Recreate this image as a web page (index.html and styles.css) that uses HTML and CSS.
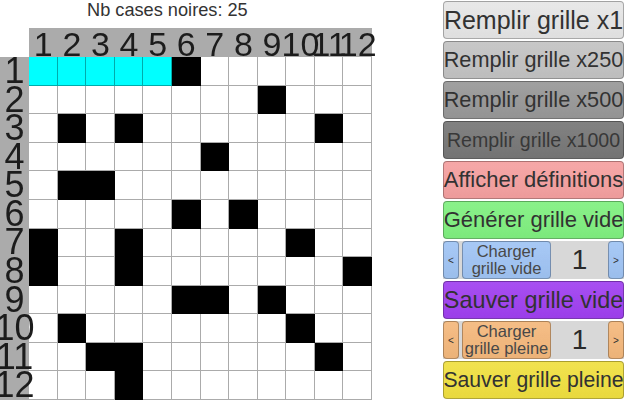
FILE: index.html
```html
<!DOCTYPE html>
<html lang="fr">
<head>
<meta charset="utf-8">
<title>Grille</title>
<link rel="stylesheet" href="styles.css">
</head>
<body>
<div class="page">
  <div class="left">
    <div class="title">Nb cases noires: 25</div>
    <div class="board">
      <div class="corner"></div>
      <div class="colhead">
        <span>1</span><span>2</span><span>3</span><span>4</span><span>5</span><span>6</span><span>7</span><span>8</span><span>9</span><span>10</span><span>11</span><span>12</span>
      </div>
      <div class="rowhead">
        <span>1</span><span>2</span><span>3</span><span>4</span><span>5</span><span>6</span><span>7</span><span>8</span><span>9</span><span>10</span><span>11</span><span>12</span>
      </div>
      <div class="cells">
        <span class="h"></span><span class="h"></span><span class="h"></span><span class="h"></span><span class="h"></span><span class="b"></span><span></span><span></span><span></span><span></span><span></span><span></span>
        <span></span><span></span><span></span><span></span><span></span><span></span><span></span><span></span><span class="b"></span><span></span><span></span><span></span>
        <span></span><span class="b"></span><span></span><span class="b"></span><span></span><span></span><span></span><span></span><span></span><span></span><span class="b"></span><span></span>
        <span></span><span></span><span></span><span></span><span></span><span></span><span class="b"></span><span></span><span></span><span></span><span></span><span></span>
        <span></span><span class="b"></span><span class="b"></span><span></span><span></span><span></span><span></span><span></span><span></span><span></span><span></span><span></span>
        <span></span><span></span><span></span><span></span><span></span><span class="b"></span><span></span><span class="b"></span><span></span><span></span><span></span><span></span>
        <span class="b"></span><span></span><span></span><span class="b"></span><span></span><span></span><span></span><span></span><span></span><span class="b"></span><span></span><span></span>
        <span class="b"></span><span></span><span></span><span class="b"></span><span></span><span></span><span></span><span></span><span></span><span></span><span></span><span class="b"></span>
        <span></span><span></span><span></span><span></span><span></span><span class="b"></span><span class="b"></span><span></span><span class="b"></span><span></span><span></span><span></span>
        <span></span><span class="b"></span><span></span><span></span><span></span><span></span><span></span><span></span><span></span><span class="b"></span><span></span><span></span>
        <span></span><span></span><span class="b"></span><span class="b"></span><span></span><span></span><span></span><span></span><span></span><span></span><span class="b"></span><span></span>
        <span></span><span></span><span></span><span class="b"></span><span></span><span></span><span></span><span></span><span></span><span></span><span></span><span></span>
      </div>
    </div>
  </div>
  <div class="panel">
    <button class="btn fill1">Remplir grille x1</button>
    <button class="btn fill250">Remplir grille x250</button>
    <button class="btn fill500">Remplir grille x500</button>
    <button class="btn fill1000">Remplir grille x1000</button>
    <button class="btn defs">Afficher définitions</button>
    <button class="btn gen">Générer grille vide</button>
    <div class="loader">
      <button class="btn arrow blue">&lt;</button>
      <button class="btn load blue">Charger<br>grille vide</button>
      <span class="num">1</span>
      <button class="btn arrow blue">&gt;</button>
    </div>
    <button class="btn save-empty">Sauver grille vide</button>
    <div class="loader">
      <button class="btn arrow orange">&lt;</button>
      <button class="btn load orange">Charger<br>grille pleine</button>
      <span class="num">1</span>
      <button class="btn arrow orange">&gt;</button>
    </div>
    <button class="btn save-full">Sauver grille pleine</button>
  </div>
</div>
</body>
</html>
```

FILE: styles.css
```css
html, body {
  margin: 0;
  padding: 0;
  background: #fff;
}
body {
  width: 626px;
  height: 401px;
  overflow: hidden;
  font-family: "Liberation Sans", Arial, sans-serif;
}
.page {
  display: flex;
}
.left {
  width: 443px;
  flex: none;
}
.title {
  height: 28px;
  box-sizing: border-box;
  padding: 0 0 0 87px;
  font-size: 18.2px;
  line-height: 20px;
  color: #333;
  white-space: nowrap;
}
.board {
  display: grid;
  grid-template-columns: 29px 343px;
  grid-template-rows: 29px 343px;
}
.colhead {
  display: flex;
  background: #ababab;
}
.colhead span {
  width: 28.583px;
  flex: none;
  height: 29px;
  display: flex;
  justify-content: center;
  font-size: 34px;
  line-height: 32px;
  white-space: nowrap;
  color: #1c1c1c;
  filter: blur(0.45px);
}
.rowhead {
  display: flex;
  flex-direction: column;
  background: #ababab;
}
.rowhead span {
  height: 28.583px;
  flex: none;
  display: flex;
  justify-content: center;
  font-size: 36px;
  line-height: 28.583px;
  white-space: nowrap;
  color: #1c1c1c;
  filter: blur(0.45px);
}
.cells {
  display: grid;
  grid-template-columns: repeat(12, 1fr);
  grid-template-rows: repeat(12, 1fr);
}
.cells span {
  background: #fff;
  box-shadow: inset -1px -1px 0 rgba(0, 0, 0, 0.33);
}
.cells .b {
  background: #000;
}
.cells .h {
  background: #00ffff;
}
.panel {
  width: 181px;
  flex: none;
  display: flex;
  flex-direction: column;
  gap: 2px;
  padding-top: 1px;
}
.btn {
  height: 38px;
  box-sizing: border-box;
  margin: 0;
  padding: 0;
  border: 1px solid rgba(0, 0, 0, 0.27);
  border-radius: 4px;
  display: flex;
  align-items: center;
  justify-content: center;
  white-space: nowrap;
  color: #323232;
  font-family: "Liberation Sans", Arial, sans-serif;
  background-image: linear-gradient(to bottom, rgba(255, 255, 255, 0.08), rgba(0, 0, 0, 0.03));
}
.fill1 { background-color: #e6e6e6; font-size: 25px; }
.fill250 { background-color: #c3c3c3; font-size: 21.7px; }
.fill500 { background-color: #989898; font-size: 21.7px; }
.fill1000 { background-color: #777777; font-size: 19.6px; color: #383838; }
.defs { background-color: #f5a0a0; font-size: 22px; }
.gen { background-color: #80f080; font-size: 22px; }
.save-empty { background-color: #a040f0; font-size: 23.4px; }
.save-full { background-color: #f0e040; font-size: 21.2px; }
.loader {
  height: 38px;
  display: flex;
  background: #d8d8d8;
}
.arrow {
  width: 16px;
  flex: none;
  font-size: 10px;
}
.load {
  width: 89px;
  flex: none;
  margin-left: 3px;
  font-size: 16.5px;
  line-height: 17px;
  text-align: center;
  color: #484848;
}
.num {
  flex: 1;
  display: flex;
  align-items: center;
  justify-content: center;
  font-size: 28px;
  color: #2a2a2a;
}
.blue { background-color: #a0c4f4; }
.orange { background-color: #f4b87c; }
```
